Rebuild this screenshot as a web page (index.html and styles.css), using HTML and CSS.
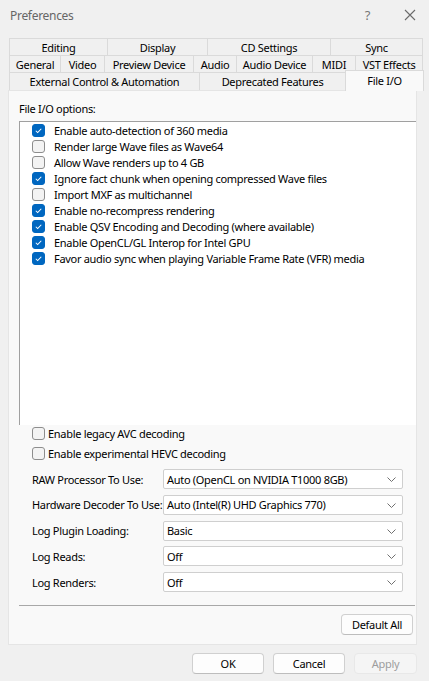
FILE: index.html
```html
<!DOCTYPE html>
<html>
<head>
<meta charset="utf-8">
<link rel="stylesheet" href="styles.css">
</head>
<body>
<div class="win">
  <div class="titlebar">
    <span class="title">Preferences</span>
    <span class="help">?</span>
    <svg class="close" width="12" height="12" viewBox="0 0 12 12"><path d="M1 1 L11 11 M11 1 L1 11" stroke="#6a6a6a" stroke-width="1.1" fill="none"/></svg>
  </div>
  <div class="tabs">
    <div class="tabrow r1">
      <div class="tab" style="width:99px">Editing</div>
      <div class="tab" style="width:101px">Display</div>
      <div class="tab" style="width:124px">CD Settings</div>
      <div class="tab" style="width:93px">Sync</div>
    </div>
    <div class="tabrow r2">
      <div class="tab" style="width:52px">General</div>
      <div class="tab" style="width:45px">Video</div>
      <div class="tab" style="width:90px">Preview Device</div>
      <div class="tab" style="width:44px">Audio</div>
      <div class="tab" style="width:77px">Audio Device</div>
      <div class="tab" style="width:44px">MIDI</div>
      <div class="tab" style="width:68px">VST Effects</div>
    </div>
    <div class="tabrow r3">
      <div class="tab" style="width:191px">External Control &amp; Automation</div>
      <div class="tab" style="width:147px">Deprecated Features</div>
      <div class="tab sel" style="width:79px">File I/O</div>
    </div>
  </div>
  <div class="panel">
    <div class="grouplabel">File I/O options:</div>
    <div class="listbox">
      <div class="item"><span class="cb on"><svg viewBox="0 0 13 13"><path d="M3.3 6.8 L5.5 9 L9.8 4.4" stroke="#fff" stroke-width="1.2" fill="none"/></svg></span>Enable auto-detection of 360 media</div>
      <div class="item"><span class="cb"></span>Render large Wave files as Wave64</div>
      <div class="item"><span class="cb"></span>Allow Wave renders up to 4 GB</div>
      <div class="item"><span class="cb on"><svg viewBox="0 0 13 13"><path d="M3.3 6.8 L5.5 9 L9.8 4.4" stroke="#fff" stroke-width="1.2" fill="none"/></svg></span>Ignore fact chunk when opening compressed Wave files</div>
      <div class="item"><span class="cb"></span>Import MXF as multichannel</div>
      <div class="item"><span class="cb on"><svg viewBox="0 0 13 13"><path d="M3.3 6.8 L5.5 9 L9.8 4.4" stroke="#fff" stroke-width="1.2" fill="none"/></svg></span>Enable no-recompress rendering</div>
      <div class="item"><span class="cb on"><svg viewBox="0 0 13 13"><path d="M3.3 6.8 L5.5 9 L9.8 4.4" stroke="#fff" stroke-width="1.2" fill="none"/></svg></span>Enable QSV Encoding and Decoding (where available)</div>
      <div class="item"><span class="cb on"><svg viewBox="0 0 13 13"><path d="M3.3 6.8 L5.5 9 L9.8 4.4" stroke="#fff" stroke-width="1.2" fill="none"/></svg></span>Enable OpenCL/GL Interop for Intel GPU</div>
      <div class="item"><span class="cb on"><svg viewBox="0 0 13 13"><path d="M3.3 6.8 L5.5 9 L9.8 4.4" stroke="#fff" stroke-width="1.2" fill="none"/></svg></span>Favor audio sync when playing Variable Frame Rate (VFR) media</div>
    </div>
    <div class="checks">
      <div class="check"><span class="cb"></span>Enable legacy AVC decoding</div>
      <div class="check"><span class="cb"></span>Enable experimental HEVC decoding</div>
    </div>
    <div class="fields">
      <div class="field"><span class="flabel">RAW Processor To Use:</span><div class="select">Auto (OpenCL on NVIDIA T1000 8GB)<svg class="chev" width="9" height="5" viewBox="0 0 9 5"><path d="M0.5 0.5 L4.5 4.5 L8.5 0.5" stroke="#707070" fill="none"/></svg></div></div>
      <div class="field"><span class="flabel">Hardware Decoder To Use:</span><div class="select">Auto (Intel(R) UHD Graphics 770)<svg class="chev" width="9" height="5" viewBox="0 0 9 5"><path d="M0.5 0.5 L4.5 4.5 L8.5 0.5" stroke="#707070" fill="none"/></svg></div></div>
      <div class="field"><span class="flabel">Log Plugin Loading:</span><div class="select">Basic<svg class="chev" width="9" height="5" viewBox="0 0 9 5"><path d="M0.5 0.5 L4.5 4.5 L8.5 0.5" stroke="#707070" fill="none"/></svg></div></div>
      <div class="field"><span class="flabel">Log Reads:</span><div class="select">Off<svg class="chev" width="9" height="5" viewBox="0 0 9 5"><path d="M0.5 0.5 L4.5 4.5 L8.5 0.5" stroke="#707070" fill="none"/></svg></div></div>
      <div class="field"><span class="flabel">Log Renders:</span><div class="select">Off<svg class="chev" width="9" height="5" viewBox="0 0 9 5"><path d="M0.5 0.5 L4.5 4.5 L8.5 0.5" stroke="#707070" fill="none"/></svg></div></div>
    </div>
    <div class="sep"></div>
    <div class="defrow"><button class="btn def">Default All</button></div>
  </div>
  <div class="footer">
    <button class="btn ok">OK</button>
    <button class="btn cancel">Cancel</button>
    <button class="btn apply">Apply</button>
  </div>
</div>
</body>
</html>
```

FILE: styles.css
```css
* { box-sizing: border-box; }
html, body { margin: 0; padding: 0; }
body {
  width: 429px;
  height: 681px;
  background: #f0f0f0;
  font-family: "Noto Sans", "Open Sans", sans-serif;
  font-size: 11px;
  letter-spacing: -0.3px;
  color: #000;
  overflow: hidden;
}
.win { width: 429px; height: 681px; display: flex; flex-direction: column; }
.titlebar {
  height: 30px;
  display: flex;
  align-items: center;
  padding-left: 10px;
}
.title { font-size: 12px; color: #666; }
.help { margin-left: auto; font-size: 13px; color: #777; margin-right: 34px; }
.close { margin-right: 13px; }
.tabs { margin-top: 8px; margin-left: 9px; display: flex; flex-direction: column; }
.tabrow { display: flex; }
.tab {
  height: 18px;
  border: 1px solid #dadada;
  margin-right: -1px;
  margin-bottom: -1px;
  display: flex;
  align-items: center;
  justify-content: center;
  background: #f0f0f0;
  white-space: nowrap;
}
.r3 .tab { height: 19px; }
.tab.sel {
  background: #f9f9f9;
  height: 21px;
  margin-top: -2px;
  margin-bottom: -3px;
  border-bottom: none;
  position: relative;
  z-index: 2;
  align-items: flex-start;
  padding-top: 2px;
}
.panel {
  margin-left: 8px;
  width: 409px;
  height: 555px;
  background: #f9f9f9;
  border: 1px solid #e5e5e5;
  display: flex;
  flex-direction: column;
  padding: 0 0 0 10px;
}
.grouplabel { margin-top: 11px; height: 14px; line-height: 14px; }
.listbox {
  margin-top: 5px;
  height: 304px;
  background: #fff;
  border-top: 1px solid #a0a0a0;
  border-left: 1px solid #a0a0a0;
  padding: 0 0 0 12px;
}
.item { height: 16px; display: flex; align-items: center; white-space: nowrap; }
.item .cb { margin-right: 9px; }
.cb {
  width: 13px;
  height: 13px;
  border: 1px solid #8d8d8d;
  border-radius: 3px;
  background: #f3f3f3;
  flex: none;
  display: inline-block;
}
.cb.on { background: #0067c0; border-color: #0067c0; }
.cb svg { display: block; width: 11px; height: 11px; }
.checks { display: flex; flex-direction: column; gap: 4px; padding-left: 13px; }
.check { height: 16px; display: flex; align-items: center; white-space: nowrap; }
.check .cb { margin-right: 3px; }
.fields { margin-top: 8px; padding-left: 13px; display: flex; flex-direction: column; gap: 5.8px; }
.field { height: 20px; display: flex; align-items: center; white-space: nowrap; }
.flabel { width: 131px; flex: none; }
.select {
  width: 240px;
  height: 20px;
  background: #fff;
  border: 1px solid #cfcfcf;
  border-radius: 2px;
  display: flex;
  align-items: center;
  padding-left: 3px;
  position: relative;
}
.chev { position: absolute; right: 6px; top: 7px; }
.sep { margin-top: 13px; height: 1px; background: #a8a8a8; width: 396px; }
.defrow { display: flex; justify-content: flex-end; padding-right: 3px; margin-top: 8px; }
.btn {
  font-family: "Noto Sans", "Open Sans", sans-serif;
  font-size: 11px;
  letter-spacing: -0.3px;
  height: 21px;
  background: #fdfdfd;
  border: 1px solid #d0d0d0;
  border-bottom-color: #bdbdbd;
  border-radius: 4px;
  color: #000;
  padding: 0;
}
.def { width: 72px; }
.footer { display: flex; margin-top: 8px; padding-left: 192px; gap: 9px; }
.ok, .cancel { width: 72px; }
.apply { width: 63px; background: #f5f5f5; border-color: #e8e8e8; color: #9d9d9d; }
```
